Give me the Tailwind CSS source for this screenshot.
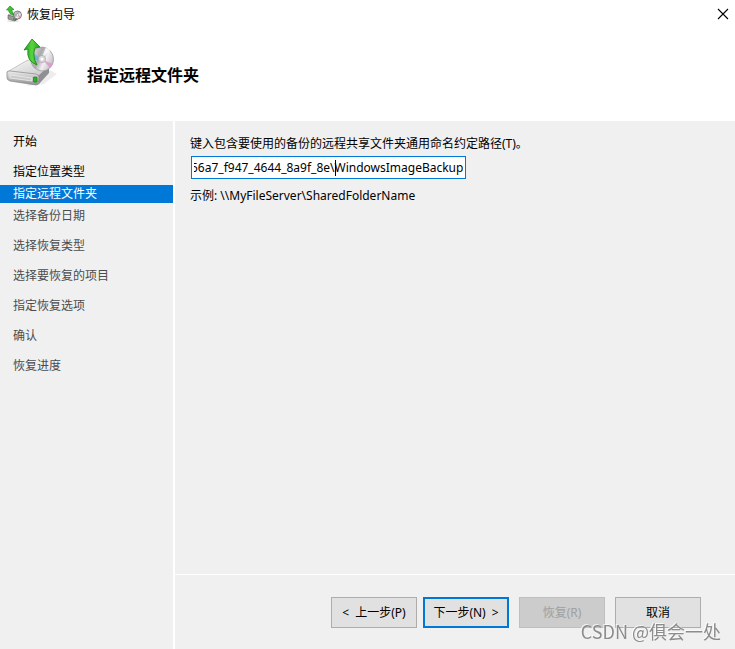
<!DOCTYPE html>
<html lang="zh-CN">
  <head>
    <meta charset="UTF-8" />
    <meta name="viewport" content="width=device-width, initial-scale=1.0" />
    <script src="https://cdn.jsdelivr.net/npm/@tailwindcss/browser@4"></script>
    <title>恢复向导</title>
  </head>
  <body
    class="flex min-h-screen flex-col bg-white font-['Noto_Sans','Noto_Sans_CJK_SC',sans-serif] text-[12px] leading-[18px] text-black"
  >
    <!-- gradients for the drive icons -->
    <svg class="absolute size-0" aria-hidden="true">
      <defs>
        <linearGradient id="top" x1="0" y1="0" x2="1" y2="1">
          <stop offset="0" stop-color="#fafafa" />
          <stop offset="1" stop-color="#c4c4c6" />
        </linearGradient>
        <linearGradient id="front" x1="0" y1="0" x2="0" y2="1">
          <stop offset="0" stop-color="#efefef" />
          <stop offset="1" stop-color="#8e8e8e" />
        </linearGradient>
        <linearGradient id="disc" x1="0" y1="0" x2="1" y2="1">
          <stop offset="0" stop-color="#f6f6f6" />
          <stop offset="0.4" stop-color="#a9a9ad" />
          <stop offset="0.6" stop-color="#f2eef2" />
          <stop offset="1" stop-color="#a6a6a8" />
        </linearGradient>
        <linearGradient id="arrow" x1="0" y1="0" x2="1" y2="0">
          <stop offset="0" stop-color="#1f9a1c" />
          <stop offset="0.5" stop-color="#5ad53f" />
          <stop offset="1" stop-color="#23a01e" />
        </linearGradient>
      </defs>
    </svg>

    <div class="flex h-7 items-center px-1.5">
      <svg class="size-4 overflow-visible" viewBox="0 0 16 16">
        <ellipse cx="7" cy="15" rx="6" ry="1" fill="#000" opacity="0.12" />
        <path d="M2 9 7 7 14 9 9 12Z" fill="#d4d4d4" stroke="#8c8c8c" stroke-width="0.5" />
        <path d="M2 9 9 11V15L2 13Z" fill="#9b9b9b" stroke="#5c5c5c" stroke-width="0.6" />
        <path d="M9 11 14 9V12L9 15Z" fill="#5c5c5c" />
        <rect x="7" y="12" width="1.5" height="2" fill="#24b324" />
        <circle cx="11.500" cy="9" r="4" fill="url(#disc)" stroke="#7c7278" stroke-width="0.9" />
        <path d="M11.500 9 15 10 13.500 12Z" fill="#d79a9a" />
        <circle cx="11.500" cy="9" r="1.1" fill="#fff" stroke="#888" stroke-width="0.4" />
        <path d="M4 0 8 3.5H6Q5.500 6 8 9 3 8.500 2.500 4H0.500Z" fill="#3cc52e" stroke="#15801a" stroke-width="0.6" />
      </svg>
      <span class="ml-[5px] pt-0.5">恢复向导</span>
      <button type="button" class="ml-auto" aria-label="关闭">
        <svg class="size-3" viewBox="0 0 12 12" stroke="#000" stroke-width="1.1">
          <path d="M1 1 11 11M11 1 1 11" />
        </svg>
      </button>
    </div>

    <header class="flex h-[93px] gap-[31px] px-1.5 pt-2.5">
      <svg class="size-[50px] overflow-visible" viewBox="0 0 50 50">
        <path d="M20 48 38 46 51 36 44 32Z" fill="#000" opacity="0.07" />
        <path d="M1 34 20 23Q22 22 24 22L41 25Q44 26 43 29L32 39 2 36Z" fill="url(#top)" stroke="#a4a4a4" stroke-width="0.6" />
        <path d="M32 38 43 28V35L33 46Z" fill="#8f8f92" />
        <path d="M1 34Q2 33 4 33L30 36Q33 37 33 39V44Q33 47 30 47L4 43Q1 42 1 40Z" fill="url(#front)" stroke="#858588" stroke-width="0.7" />
        <path d="M4 37 26 40V43L4 40Z" fill="#c9c9c9" stroke="#f3f3f3" stroke-width="0.7" />
        <rect x="27.5" y="39" width="3.5" height="5" rx="0.6" fill="#28b428" stroke="#087208" stroke-width="0.6" />
        <ellipse cx="36" cy="21" rx="11.5" ry="12" transform="rotate(-20 36 21)" fill="url(#disc)" stroke="#9c9c9e" stroke-width="0.7" />
        <path d="M35 21 28 16 27 23Z" fill="#4fb9e0" opacity="0.8" />
        <path d="M37 22 47 26 44 30Z" fill="#dc93cf" opacity="0.8" />
        <path d="M36 20 40 9 44 12Z" fill="#fff" opacity="0.8" />
        <circle cx="36" cy="21" r="3.6" fill="#d8d8da" stroke="#a0a0a2" stroke-width="0.6" />
        <circle cx="36" cy="21" r="1.5" fill="#fff" />
        <path d="M26 1 34 9 29 10Q26 18 31 27 20 23 22 11L18 12Z" fill="url(#arrow)" stroke="#158414" stroke-width="0.8" stroke-linejoin="round" />
      </svg>
      <h1 class="pt-[25px] text-[16px] leading-6 font-bold">指定远程文件夹</h1>
    </header>

    <div class="flex flex-1 bg-[#f0f0f0]">
      <nav class="w-[173px] shrink-0 pt-3 text-[#4c4c4c]">
        <ol class="flex flex-col gap-3">
          <li class="px-[13px] text-black">开始</li>
          <li class="px-[13px] text-black">指定位置类型</li>
          <li class="-my-2 bg-[#0078d7] px-[13px] text-white" aria-current="step">指定远程文件夹</li>
          <li class="px-[13px]">选择备份日期</li>
          <li class="px-[13px]">选择恢复类型</li>
          <li class="px-[13px]">选择要恢复的项目</li>
          <li class="px-[13px]">指定恢复选项</li>
          <li class="px-[13px]">确认</li>
          <li class="px-[13px]">恢复进度</li>
        </ol>
      </nav>

      <form class="flex min-w-0 flex-1 flex-col border-l-2 border-white">
        <div class="flex flex-1 flex-col items-start px-[15px] pt-3.5">
          <label for="path">键入包含要使用的备份的远程共享文件夹通用命名约定路径(T)。</label>
          <div class="relative mt-[3px] ml-px w-[275px] max-w-full">
            <input
              type="text"
              id="path"
              value="56a7_f947_4644_8a9f_8e\WindowsImageBackup"
              spellcheck="false"
              class="block h-[23px] w-full border border-[#0078d7] bg-white px-0.5 outline-none"
            />
            <!-- caret -->
            <span class="absolute top-1 left-36 h-4 w-px bg-black"></span>
          </div>
          <p class="mt-2">示例: \\MyFileServer\SharedFolderName</p>
        </div>

        <div class="flex h-[75px] items-start justify-end gap-2.5 border-t border-white pt-[22px] pr-[34px]">
          <div class="flex gap-1.5">
            <button type="button" class="flex h-[31px] w-[86px] items-center justify-center gap-1.5 border border-[#adadad] bg-[#e1e1e1]">
              <span>&lt;</span>
              <span>上一步(P)</span>
            </button>
            <button type="button" class="flex h-[31px] w-[86px] items-center justify-center gap-1.5 border-2 border-[#0078d7] bg-[#e1e1e1]">
              <span>下一步(N)</span>
              <span>&gt;</span>
            </button>
          </div>
          <button type="button" disabled class="h-[31px] w-[86px] border border-[#bfbfbf] bg-[#cccccc] text-[#a0a0a0]">恢复(R)</button>
          <button type="button" class="h-[31px] w-[86px] border border-[#adadad] bg-[#e1e1e1]">取消</button>
        </div>
      </form>
    </div>

    <span
      class="pointer-events-none fixed right-3.5 bottom-1.5 font-['Noto_Sans_CJK_SC',sans-serif] text-[18px] leading-6 text-[#8c8c8c] [text-shadow:-1px_-1px_0_#ffffffb0]"
      >CSDN @俱会一处</span
    >

    <script>
      // keep the end of the long path in view
      const pathEl = document.querySelector("#path");
      pathEl.scrollLeft = 4;
    </script>
  </body>
</html>
